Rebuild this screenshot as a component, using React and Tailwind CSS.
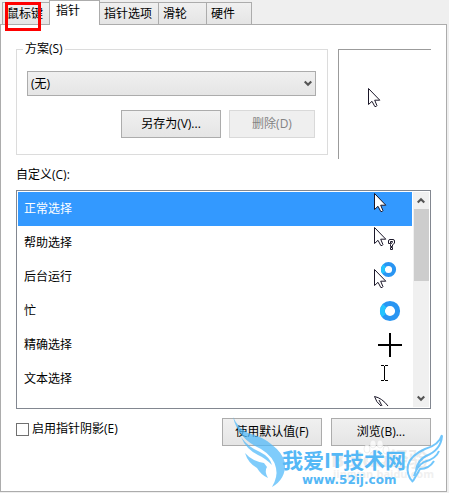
import React from "react";

const tabs = [
  { label: "鼠标键", width: "w-12" },
  { label: "指针", width: "w-[51px]", active: true },
  { label: "指针选项", width: "w-[60px]" },
  { label: "滑轮", width: "w-[49px]" },
  { label: "硬件", width: "w-[46px]" },
];

function Arrow({ x = 0, y = 0 }) {
  return (
    <path
      transform={`translate(${x} ${y})`}
      d="M.5.5V16.500L4 13.300L6.800 18.500Q8.500 19 8.900 17.500L6.700 12.200H11.800Z"
      fill="white"
      stroke="#1b1729"
    />
  );
}

function Ring({ cx, cy, r, width }) {
  return (
    <g fill="none" strokeWidth={width}>
      <circle cx={cx} cy={cy} r={r} stroke="#2995f2" />
      <path
        d={`M${cx - r * 0.7} ${cy - r * 0.7}A${r} ${r} 0 0 0 ${cx - r * 0.8} ${cy + r * 0.6}`}
        stroke="#24c4ff"
      />
    </g>
  );
}

const rows = [
  { label: "正常选择", icon: <Arrow x={6} y={1} /> },
  {
    label: "帮助选择",
    icon: (
      <>
        <Arrow x={6} y={1} />
        <path
          d="M20.500 17.500V15Q20.500 13.500 22 13.500H25Q26.500 13.500 26.500 15V17L24.500 19V20.500H22.500V18.500L24.500 16V15.500H22.500V17.500ZM22.500 21.500H24.500V23.500H22.500Z"
          fill="white"
          stroke="#1b1729"
        />
      </>
    ),
  },
  {
    label: "后台运行",
    icon: (
      <>
        <Arrow x={6} y={9} />
        <Ring cx={20.5} cy={9.5} r={5.6} width={4} />
      </>
    ),
  },
  { label: "忙", icon: <Ring cx={22} cy={17} r={7.6} width={5} /> },
  { label: "精确选择", icon: <path d="M22 5V29M10 17H34" stroke="black" strokeWidth="2" /> },
  {
    label: "文本选择",
    icon: <path d="M13 3.500H16M17 3.500H20M16.500 4V18M13 18.500H16M17 18.500H20" stroke="black" fill="none" />,
  },
  {
    label: "",
    icon: <path d="M6.500.5Q8 6 13 10M6.500.5Q14 2 20 10M11 4L14 10" stroke="#1b1729" fill="none" />,
  },
];

function Chevron({ up = false }) {
  return (
    <svg width="8" height="7" viewBox="0 0 8 7" className={up ? "rotate-180" : ""}>
      <path d="M.7 1.500L4 4.800L7.300 1.500" fill="none" stroke="#555" strokeWidth="2.200" />
    </svg>
  );
}

function Button({ children, className = "w-[100px]", disabled }) {
  return (
    <button
      disabled={disabled}
      className={`h-7 border border-[#acacac] bg-linear-to-b from-[#f0f0f0] to-[#e5e5e5] text-center disabled:border-[#d9d9d9] disabled:bg-none disabled:bg-[#efefef] disabled:text-[#838383] ${className}`}
    >
      {children}
    </button>
  );
}

function Watermark() {
  return (
    <div className="pointer-events-none absolute right-0 bottom-0 h-[81px] w-[221px] whitespace-nowrap">
      <div className="absolute top-9 left-[103px] text-[20px] leading-6 font-bold text-[#ececec]">Baidu经验</div>
      <div className="absolute top-[54px] left-[105px] text-[11px] leading-4 font-bold text-[#f0f0f0]">jingyan.baidu.com</div>
      <svg width="221" height="81" viewBox="0 0 221 81" className="absolute inset-0">
        <g fill="white" fillOpacity=".7" stroke="#dddddd" strokeOpacity=".5">
          <ellipse cx="139" cy="37" rx="3" ry="4" />
          <ellipse cx="145" cy="32" rx="3" ry="4" />
          <ellipse cx="152" cy="32" rx="3" ry="4" />
          <ellipse cx="158" cy="38" rx="3" ry="4" />
          <path d="M148 38Q152 38 157 46Q159 51 153 51H144Q137 51 140 46Q144 38 148 38Z" />
        </g>
        <g fill="#4db8fa" fillOpacity=".72">
          <path d="M5 5Q10 16 20 21Q35 25 43 32Q55 41 57 51Q58 67 44 75Q50 65 48 56Q46 45 33 37Q10 27 5 5Z" />
          <path d="M13 25Q20 35 32 40Q42 45 44 53Q37 46 30 43Q18 37 13 25Z" />
          <path d="M17 41Q24 49 36 51L39 55Q36 59 40 66Q33 63 29 56Q20 51 17 41Z" />
        </g>
        <path
          d="M214 23Q211 33 197 37Q183 43 180 53Q178 63 185 70M214 24Q213 38 198 44Q190 48 188 58M211 39Q208 47 196 50Q189 54 186 64M206 49Q201 57 192 57L185 69"
          fill="none"
          stroke="#4db8fa"
          strokeOpacity=".8"
          strokeWidth="2"
          strokeLinejoin="round"
        />
      </svg>
      <div className="absolute top-9 left-[54px] text-[21px] leading-6 font-bold text-[#55b8f6]">我爱IT技术网</div>
      <div className="absolute top-[60px] left-[74px] font-['DejaVu_Sans',sans-serif] text-[12px] leading-4 font-bold text-[#55b8f6]">www.52ij.com</div>
    </div>
  );
}

export default function App() {
  return (
    <main className="relative bg-[#efefef] pr-[2px] pb-px font-['Open_Sans','Noto_Sans_CJK_SC',sans-serif] text-[12px] leading-4 text-black">
      <div role="tablist" className="relative z-10 flex h-[25px] items-end pl-[2px]">
        {tabs.map((tab) => (
          <button
            key={tab.label}
            role="tab"
            aria-selected={!!tab.active}
            className={`${tab.width} -mr-px shrink-0 border border-[#acacac] text-left whitespace-nowrap ${
              tab.active ? "z-10 h-[25px] border-b-0 bg-white pb-1 pl-[6px]" : "h-[23px] bg-linear-to-b from-[#f0f0f0] to-[#e5e5e5] pl-1"
            }`}
          >
            {tab.label}
          </button>
        ))}
      </div>
      <span className="absolute top-[2px] left-[5px] z-20 h-[29px] w-9 border-3 border-[#ff0000]" />

      <section className="-mt-px border border-[#acacac] bg-white px-[15px] pt-4 pb-[45px]">
        <div className="flex gap-[10px]">
          <fieldset className="h-[114px] min-w-0 flex-1 border border-[#dcdcdc] pr-[11px] pl-[10px]">
            <legend className="-ml-1 px-[2px]">方案(S)</legend>
            <div className="relative mt-[14px]">
              <select aria-label="方案" className="h-[25px] w-full appearance-none border border-[#acacac] bg-linear-to-b from-[#f0f0f0] to-[#e5e5e5] px-[3px]">
                <option>(无)</option>
              </select>
              <span className="pointer-events-none absolute inset-y-0 right-1 flex items-center">
                <Chevron />
              </span>
            </div>
            <div className="mt-[14px] flex justify-end gap-2 pr-px">
              <Button>另存为(V)...</Button>
              <Button disabled className="w-[86px]">删除(D)</Button>
            </div>
          </fieldset>
          <div className="mt-2 h-[110px] w-[93px] border-t border-l border-[#9b9b9b]">
            <svg width="50" height="60" viewBox="0 0 50 60">
              <Arrow x={29} y={38} />
            </svg>
          </div>
        </div>

        <div className="mt-2 leading-4">自定义(C):</div>
        <div className="mt-[7px] flex h-[219px] border border-[#828790] p-px">
          <ul role="listbox" aria-label="自定义" className="min-w-0 flex-1 overflow-hidden">
            {rows.map((row, i) => (
              <li
                key={i}
                role="option"
                aria-selected={i === 0}
                className={`flex h-[34px] items-center justify-between pl-[6px] ${i === 0 ? "bg-[#3399ff] text-white" : ""}`}
              >
                <span>{row.label}</span>
                <svg width="44" height="34" viewBox="0 0 44 34">{row.icon}</svg>
              </li>
            ))}
          </ul>
          <div className="ml-px flex w-4 flex-col items-center bg-[#f0f0f0]">
            <div className="flex h-[17px] items-center"><Chevron up /></div>
            <div className="h-[72px] w-[15px] bg-[#cdcdcd]" />
            <div className="mt-auto flex h-[17px] items-center"><Chevron /></div>
          </div>
        </div>

        <div className="mt-[9px] flex items-start gap-[9px]">
          <label className="mr-auto flex items-center gap-[3px] pt-[3px]">
            <input type="checkbox" className="size-[13px] appearance-none border border-[#707070] bg-white checked:bg-[#3399ff]" />
            启用指针阴影(E)
          </label>
          <Button>使用默认值(F)</Button>
          <Button>浏览(B)...</Button>
        </div>
      </section>
      <Watermark />
    </main>
  );
}
